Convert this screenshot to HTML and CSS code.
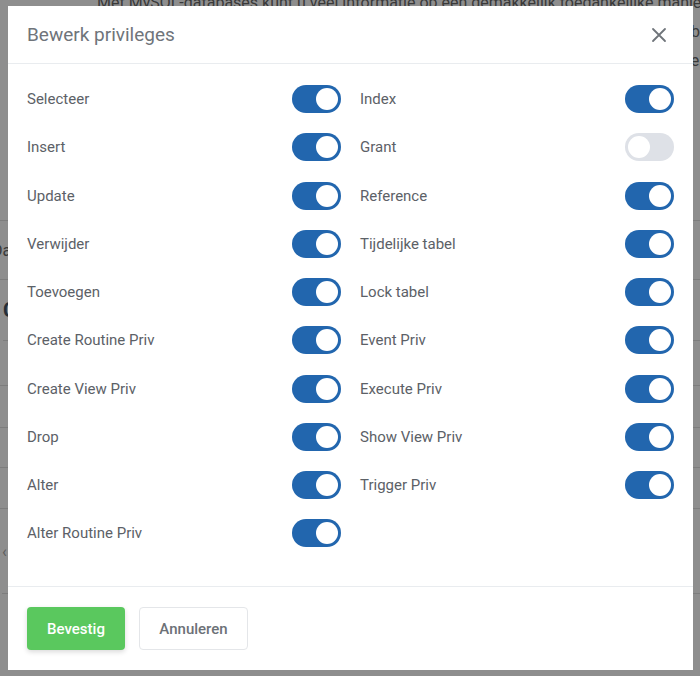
FILE: index.html
```html
<!DOCTYPE html>
<html lang="nl">
<head>
<meta charset="utf-8">
<title>Bewerk privileges</title>
<link rel="stylesheet" href="styles.css">
</head>
<body>
<div class="page" aria-hidden="true">
  <p class="intro">Met MySQL-databases kunt u veel informatie op een gemakkelijk toegankelijke manier opslaan en
    beheren. De databases zelf zijn niet zichtbaar voor bezoekers van uw website. U kunt u met een database verbinden
    via verschillende programmeertalen, bijvoorbeeld PHP, om gegevens op te vragen.</p>
  <div class="table">
    <div class="trow r1"></div>
    <div class="trow r2">Databases</div>
    <div class="trow r3">Connecties</div>
    <div class="trow r4"></div>
    <div class="trow r5"></div>
    <div class="trow r6"></div>
    <div class="trow r7"></div>
    <div class="trow r8">‹</div>
  </div>
</div>

<div class="backdrop">
  <div class="modal">
    <div class="modal-header">
      <h2 class="modal-title">Bewerk privileges</h2>
      <button class="close" aria-label="Sluiten">
        <svg width="16" height="16" viewBox="0 0 16 16"><path d="M2 2 L14 14 M14 2 L2 14" stroke="#6f747a" stroke-width="1.8" stroke-linecap="round" fill="none"/></svg>
      </button>
    </div>
    <div class="modal-body">
      <div class="grid">
        <label class="item"><span>Selecteer</span><span class="switch on"></span></label>
        <label class="item"><span>Index</span><span class="switch on"></span></label>
        <label class="item"><span>Insert</span><span class="switch on"></span></label>
        <label class="item"><span>Grant</span><span class="switch"></span></label>
        <label class="item"><span>Update</span><span class="switch on"></span></label>
        <label class="item"><span>Reference</span><span class="switch on"></span></label>
        <label class="item"><span>Verwijder</span><span class="switch on"></span></label>
        <label class="item"><span>Tijdelijke tabel</span><span class="switch on"></span></label>
        <label class="item"><span>Toevoegen</span><span class="switch on"></span></label>
        <label class="item"><span>Lock tabel</span><span class="switch on"></span></label>
        <label class="item"><span>Create Routine Priv</span><span class="switch on"></span></label>
        <label class="item"><span>Event Priv</span><span class="switch on"></span></label>
        <label class="item"><span>Create View Priv</span><span class="switch on"></span></label>
        <label class="item"><span>Execute Priv</span><span class="switch on"></span></label>
        <label class="item"><span>Drop</span><span class="switch on"></span></label>
        <label class="item"><span>Show View Priv</span><span class="switch on"></span></label>
        <label class="item"><span>Alter</span><span class="switch on"></span></label>
        <label class="item"><span>Trigger Priv</span><span class="switch on"></span></label>
        <label class="item"><span>Alter Routine Priv</span><span class="switch on"></span></label>
      </div>
    </div>
    <div class="modal-footer">
      <button class="btn btn-primary">Bevestig</button>
      <button class="btn btn-light">Annuleren</button>
    </div>
  </div>
</div>
</body>
</html>
```

FILE: styles.css
```css
html, body {
  margin: 0;
  padding: 0;
  height: 100%;
}
body {
  font-family: Roboto, "Liberation Sans", sans-serif;
  background: #ffffff;
  overflow: hidden;
}

/* underlying page */
.page {
  width: 700px;
  height: 676px;
  overflow: hidden;
  color: #555;
}
.intro {
  margin: -12px 0 0 97px;
  font-size: 16px;
  line-height: 29px;
  width: 640px;
  white-space: normal;
}
.table {
  margin-top: 98px;
}
.trow {
  border-bottom: 1px solid #dcdcdc;
  font-size: 16px;
  display: flex;
  align-items: center;
  padding-left: 0;
  margin-left: -8px;
}
.r1 { height: 18px; }
.r2 { height: 58px; }
.r3 { height: 60px; font-size: 20px; font-weight: 700; color: #2c3e50; margin-left: 3px; }
.r4 { height: 44px; }
.r5 { height: 41px; }
.r6 { height: 39px; }
.r7 { height: 40px; }
.r8 { height: 84px; color: #999; margin-left: 2px; }

/* modal */
.backdrop {
  position: fixed;
  inset: 0;
  background: rgba(30, 30, 30, 0.5);
  display: flex;
  padding: 6px 7px 6px 8px;
}
.modal {
  flex: 1;
  background: #fff;
  display: flex;
  flex-direction: column;
}
.modal-header {
  height: 57px;
  border-bottom: 1px solid #e9ecef;
  display: flex;
  align-items: center;
  justify-content: space-between;
  padding: 0 26px 0 19px;
}
.modal-title {
  margin: 0;
  font-size: 19px;
  font-weight: 400;
  color: #6f747a;
}
.close {
  border: 0;
  background: none;
  padding: 0;
  display: flex;
  cursor: pointer;
}
.modal-body {
  flex: 1;
  padding: 21px 19px 0 19px;
}
.grid {
  display: grid;
  grid-template-columns: 1fr 1fr;
  column-gap: 19px;
  row-gap: 20.25px;
}
.item {
  height: 28px;
  display: flex;
  align-items: center;
  justify-content: space-between;
  font-size: 15px;
  color: #5c6167;
}
.switch {
  width: 49px;
  height: 28px;
  border-radius: 14px;
  background: #dee1e7;
  position: relative;
  flex: none;
}
.switch::after {
  content: "";
  position: absolute;
  top: 3px;
  left: 3px;
  width: 22px;
  height: 22px;
  border-radius: 50%;
  background: #fff;
}
.switch.on {
  background: #2266ae;
}
.switch.on::after {
  left: 24px;
}

.modal-footer {
  border-top: 1px solid #e9ecef;
  padding: 20px 19px 20px 19px;
  display: flex;
  gap: 14px;
}
.btn {
  height: 43px;
  border-radius: 4px;
  font-family: Roboto, "Liberation Sans", sans-serif;
  font-size: 15px;
  font-weight: 500;
  padding: 0 10px;
  cursor: pointer;
}
.btn-primary {
  background: #5ac85e;
  color: #fff;
  border: 0;
  width: 98px;
  box-shadow: 0 2px 5px rgba(0, 0, 0, 0.15);
}
.btn-light {
  background: #fff;
  color: #6c7177;
  border: 1px solid #e4e6e9;
  width: 109px;
}
```
